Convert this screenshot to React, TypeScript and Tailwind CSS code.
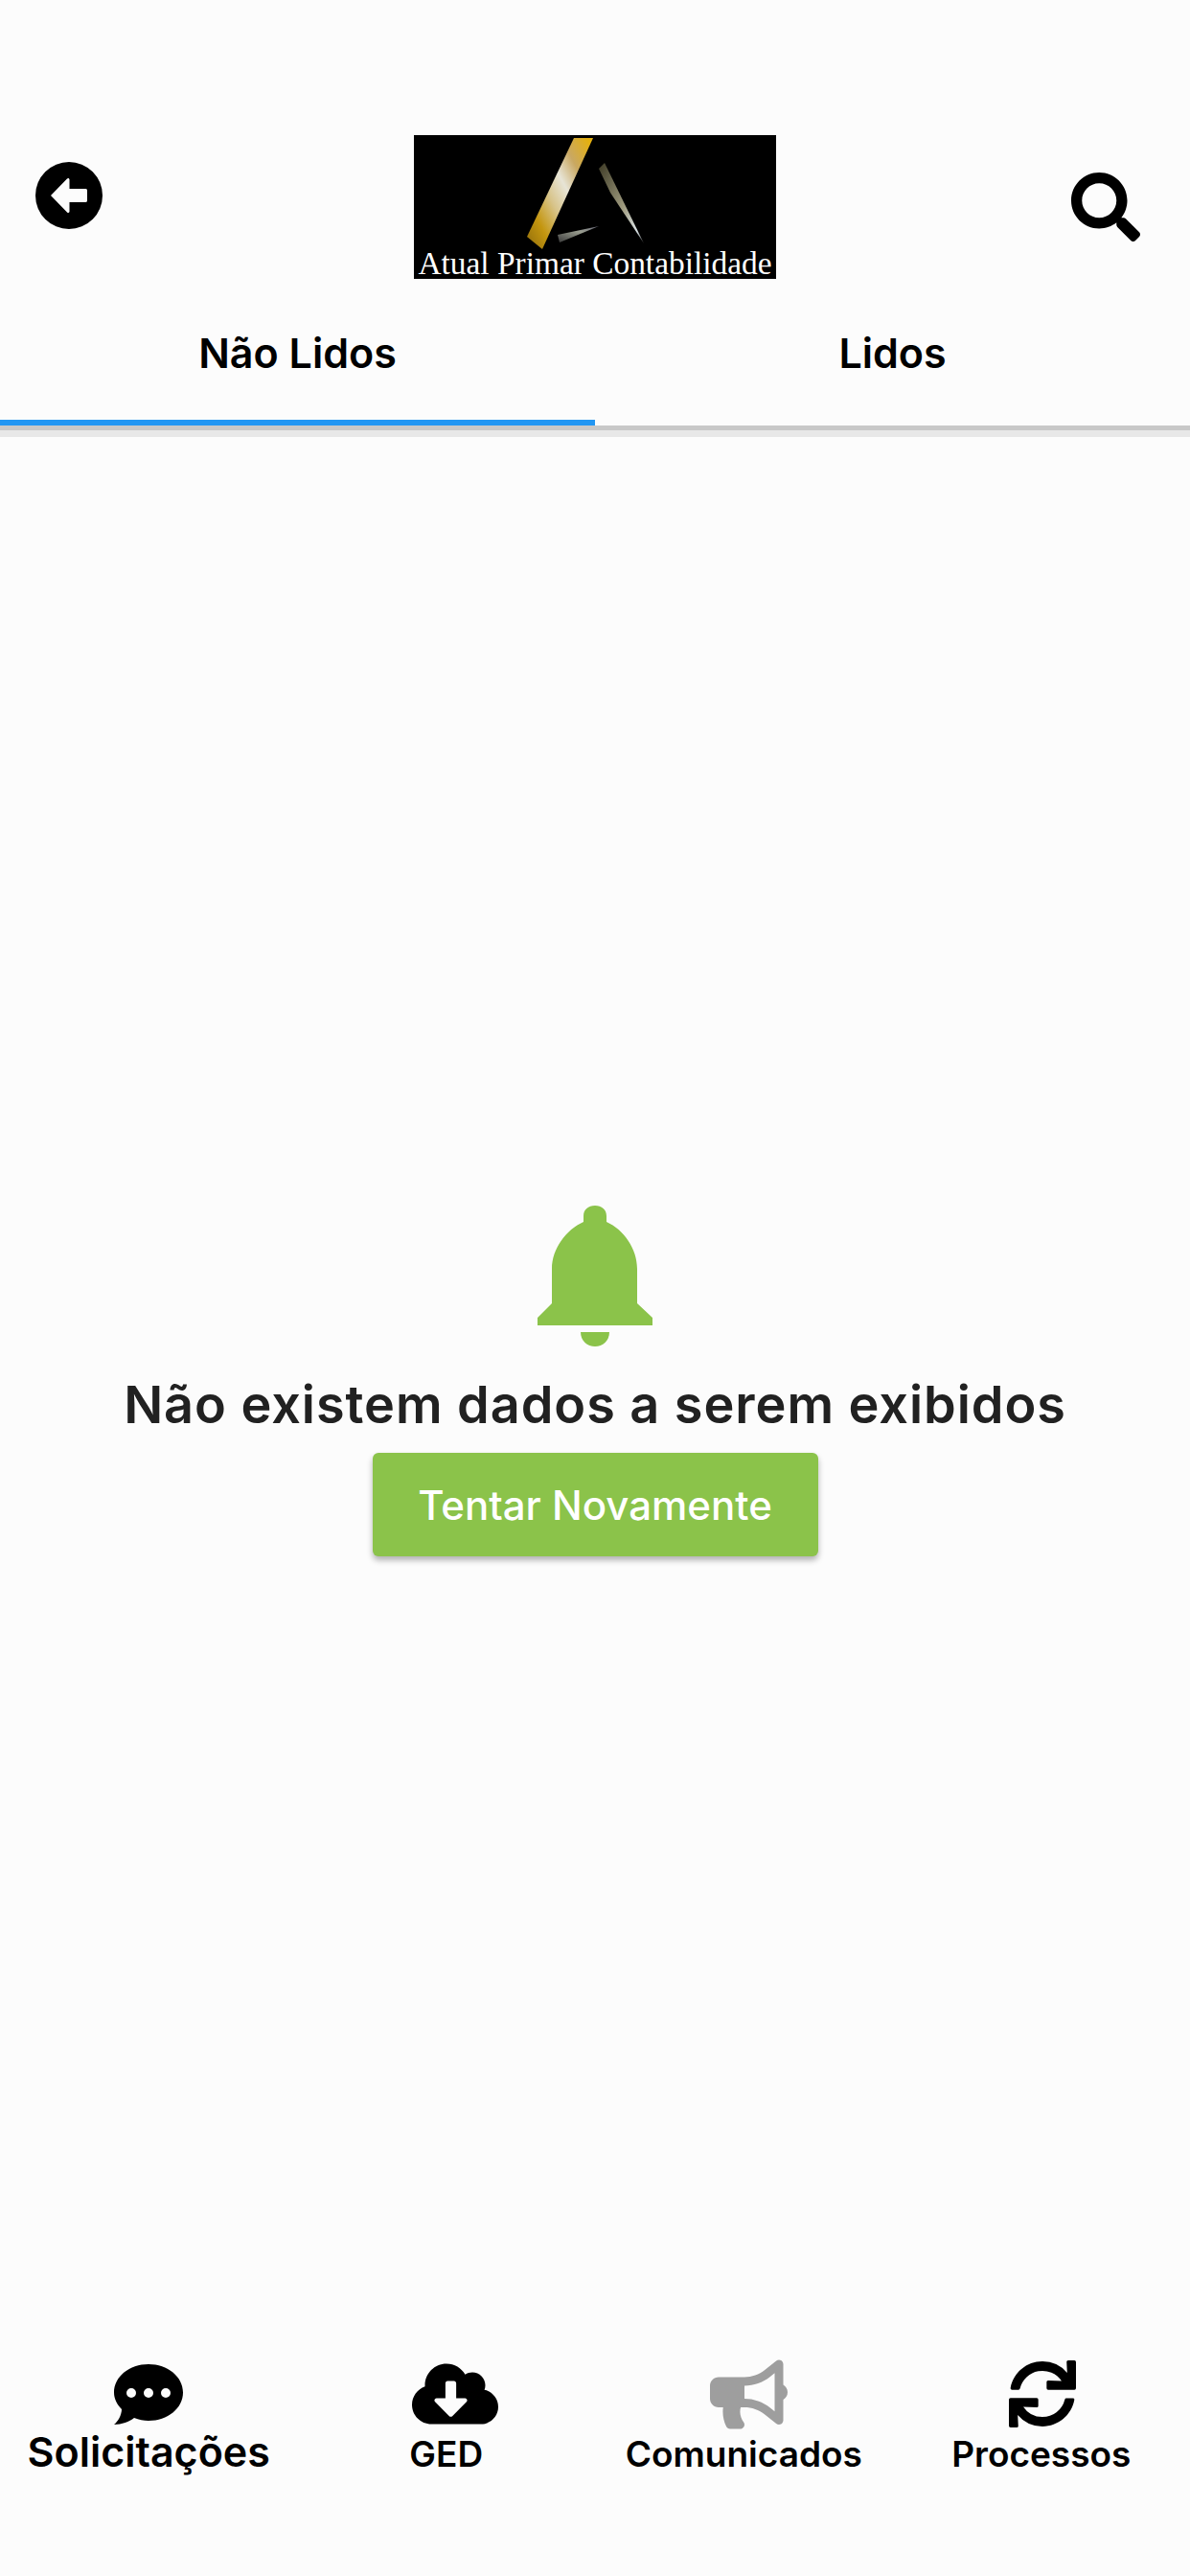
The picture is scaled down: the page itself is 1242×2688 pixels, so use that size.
import React from 'react';
import { FaSearch, FaCloudDownloadAlt, FaBullhorn, FaSync } from 'react-icons/fa';

const BackIcon = () => (
  <svg width="70" height="70" viewBox="0 0 70 70" className="text-black" fill="currentColor">
    <path
      fillRule="evenodd"
      d="M35 0 A35 35 0 1 1 35 70 A35 35 0 1 1 35 0 Z M16 35 L33 17.5 C34 16.5 35.5 17 35.5 18.5 L35.5 28 L52 28 C53.5 28 54 28.5 54 30 L54 40 C54 41.5 53.5 42 52 42 L35.5 42 L35.5 51.5 C35.5 53 34 53.5 33 52.5 Z"
    />
  </svg>
);

const CommentIcon = ({ size, className }: { size: number; className?: string }) => (
  <svg width={size} height={63} viewBox="0 0 72 63" className={className} fill="currentColor">
    <path
      fillRule="evenodd"
      d="M36 0 C56 0 72 13 72 29.5 C72 46 56 59 36 59 C31 59 26 58 21 56 C16 60 8 63 0 63 C4 60 8 53 8 47 C3 42 0 36 0 29.5 C0 13 16 0 36 0 Z M18 25 A5 5 0 1 0 18 35 A5 5 0 1 0 18 25 Z M36 25 A5 5 0 1 0 36 35 A5 5 0 1 0 36 25 Z M54 25 A5 5 0 1 0 54 35 A5 5 0 1 0 54 25 Z"
    />
  </svg>
);

const Logo = () => (
  <div className="relative w-[378px] h-[150px] bg-black flex items-end justify-center">
    <svg className="absolute inset-0" width="378" height="150" viewBox="0 0 378 150">
      <defs>
        <linearGradient id="gold" x1="0" y1="1" x2="1" y2="0.1">
          <stop offset="0" stopColor="#8f6c0c" />
          <stop offset="0.22" stopColor="#c4960f" />
          <stop offset="0.42" stopColor="#d8c48a" />
          <stop offset="0.6" stopColor="#e7e4d6" />
          <stop offset="0.78" stopColor="#c9a862" />
          <stop offset="1" stopColor="#e4b010" />
        </linearGradient>
        <linearGradient id="grey" x1="0" y1="0" x2="1" y2="1">
          <stop offset="0" stopColor="#3d3a25" />
          <stop offset="0.55" stopColor="#a09c80" />
          <stop offset="0.85" stopColor="#dbe4e8" />
          <stop offset="1" stopColor="#333" />
        </linearGradient>
        <linearGradient id="grey2" x1="0" y1="1" x2="1" y2="0">
          <stop offset="0" stopColor="#3a3a3a" />
          <stop offset="0.6" stopColor="#9a9e90" />
          <stop offset="1" stopColor="#667" />
        </linearGradient>
      </defs>
      <path d="M167 3 L187 3 L134 119 L118 106 Z" fill="url(#gold)" />
      <path d="M193 35 L199 29 L240 113 L205 60 Z" fill="url(#grey)" />
      <path d="M150 104 L193 95 L152 112 Z" fill="url(#grey2)" />
    </svg>
    <span className="relative font-['Liberation_Serif',serif] text-white text-[33.4px] leading-[32px] whitespace-nowrap">
      Atual Primar Contabilidade
    </span>
  </div>
);

const Bell = () => (
  <svg width="120" height="147" viewBox="0 0 120 147" className="text-[#8bc34a]" fill="currentColor">
    <path d="M48 17 L48 11 C48 4 53 0 60 0 C67 0 72 4 72 11 L72 17 C90 25 104 45 104 66 L104 102 L120 117 L120 125 L0 125 L0 117 L15 102 L15 66 C15 45 30 25 48 17 Z" />
    <path d="M45 132 L75 132 C75 141 68 147 60 147 C52 147 45 141 45 132 Z" />
  </svg>
);

const navItems = [
  { label: 'Solicitações', icon: CommentIcon, size: 72, active: true, shift: '' },
  { label: 'GED', icon: FaCloudDownloadAlt, size: 90, shift: 'translate-x-[9px]' },
  { label: 'Comunicados', icon: FaBullhorn, size: 81, muted: true, shift: 'translate-x-[5px]' },
  { label: 'Processos', icon: FaSync, size: 70, shift: 'translate-x-[1px]' },
];

export default function App() {
  return (
    <div className="h-[2688px] w-[1242px] bg-[#fcfcfc] flex flex-col font-['Inter',sans-serif] overflow-hidden">
      {/* Header */}
      <div className="h-[300px] pt-[141px] grid grid-cols-[1fr_378px_1fr] items-start shrink-0">
        <div className="pl-[37px] pt-[28px]">
          <BackIcon />
        </div>
        <Logo />
        <div className="flex justify-end pr-[52px] pt-[39px]">
          <FaSearch size={72} className="text-black" />
        </div>
      </div>

      {/* Tabs */}
      <div className="h-[144px] flex shrink-0 border-b-[5px] border-[#c8c8c8] shadow-[0_7px_0_#e8e8e8] box-content">
        <div className="flex-1 flex items-center justify-center border-b-[6px] border-[#2196f3]">
          <span className="text-[43px] font-semibold text-black -mt-[2px]">Não Lidos</span>
        </div>
        <div className="flex-1 flex items-center justify-center pb-[6px]">
          <span className="text-[43px] font-semibold text-black -mt-[2px]">Lidos</span>
        </div>
      </div>

      {/* Empty state */}
      <div className="flex-1 flex flex-col items-center pt-[809px]">
        <Bell />
        <p className="mt-[29px] text-[54px] leading-[64px] font-semibold text-[#212121] tracking-[0.95px]">
          Não existem dados a serem exibidos
        </p>
        <button className="mt-[18px] w-[465px] h-[108px] rounded-[6px] bg-[#8bc34a] text-white text-[42px] font-medium shadow-[0_4px_6px_rgba(0,0,0,0.3)]">
          Tentar Novamente
        </button>
      </div>

      {/* Bottom nav */}
      <div className="h-[224px] shrink-0 grid grid-cols-4">
        {navItems.map(({ label, icon: Icon, size, active, muted, shift }) => (
          <div key={label} className="flex flex-col items-center">
            <div className={`h-[72px] mt-[-2px] flex items-center justify-center ${shift}`}>
              <Icon size={size} className={muted ? 'text-[#9e9e9e]' : 'text-black'} />
            </div>
            <span className={`${active ? 'text-[43px] leading-[48px]' : 'text-[37px] leading-[48px] mt-[3px]'} font-semibold text-black`}>
              {label}
            </span>
          </div>
        ))}
      </div>
    </div>
  );
}
